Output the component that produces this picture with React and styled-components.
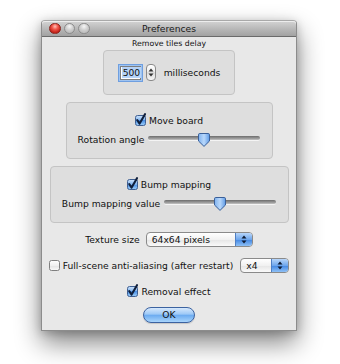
import React, { useId } from 'react';
import styled, { createGlobalStyle } from 'styled-components';

const Global = createGlobalStyle`
  html, body { margin: 0; padding: 0; background: #ffffff; }
  body {
    width: 340px; height: 364px; overflow: hidden;
    font-family: "DejaVu Sans", "Liberation Sans", sans-serif;
    color: #111;
  }
`;

const Stage = styled.div`
  padding: 20px 0 0 41px;
`;

const Window = styled.div`
  width: 256px;
  height: 311px;
  box-sizing: border-box;
  display: flex;
  flex-direction: column;
  background: #e8e8e8;
  border: 1px solid #8c8c8c;
  border-top-color: #a9a9a9;
  border-radius: 4px 4px 0 0;
  box-shadow: 0 12px 26px rgba(0, 0, 0, 0.48), 0 2px 10px rgba(0, 0, 0, 0.2);
`;

const TitleBar = styled.div`
  flex: none;
  height: 15px;
  display: grid;
  grid-template-columns: 1fr auto 1fr;
  align-items: center;
  background: linear-gradient(#d4d4d4, #b4b4b4 60%, #a2a2a2);
  border-bottom: 1px solid #6a6a6a;
  border-radius: 3px 3px 0 0;
  box-shadow: inset 0 1px 0 #ededed;
`;

const Lights = styled.div`
  display: flex;
  gap: 3px;
  padding-left: 7px;
  align-items: center;
`;

const Light = styled.span`
  width: 11.5px;
  height: 11.5px;
  box-sizing: border-box;
  border-radius: 50%;
  border: 1px solid ${p => (p.$red ? '#8a231d' : '#8c8c8c')};
  background: ${p =>
    p.$red
      ? 'radial-gradient(circle at 50% 28%, #ffc2b8 0%, #f2584c 35%, #c8261c 70%, #9e1710 100%)'
      : 'radial-gradient(circle at 50% 28%, #f6f6f6 0%, #cfcfcf 45%, #b0b0b0 100%)'};
`;

const Title = styled.div`
  font-size: 9.2px;
  line-height: 15px;
  color: #1a1a1a;
  white-space: nowrap;
`;

const Content = styled.div`
  flex: 1;
  display: flex;
  flex-direction: column;
  align-items: center;
`;

const GroupTitle = styled.div`
  margin-top: 2px;
  font-size: 7.8px;
  line-height: 10px;
  white-space: nowrap;
`;

const Group = styled.div`
  box-sizing: border-box;
  width: ${p => p.$w}px;
  height: ${p => p.$h}px;
  margin-top: ${p => p.$mt}px;
  border: 1px solid #c4c4c4;
  border-radius: 4px;
  background: #dedede;
  display: flex;
  flex-direction: column;
  align-items: center;
  justify-content: center;
  gap: 7px;
`;

const Row = styled.div`
  display: flex;
  align-items: center;
  gap: ${p => p.$gap ?? 4}px;
  margin-top: ${p => p.$mt ?? 0}px;
  height: ${p => p.$h}px;
`;

const Label = styled.span`
  font-size: 9.2px;
  line-height: 11px;
  white-space: nowrap;
  margin-left: ${p => p.$ml ?? 0}px;
`;

const Field = styled.div`
  box-sizing: border-box;
  width: 21px;
  height: 14px;
  margin: 2px;
  background: #fff;
  border: 1px solid #7e7e7e;
  box-shadow: 0 0 0 1px #9fc3f0, 0 0 0 2px #6f9fe0;
  display: flex;
  align-items: center;
  padding-left: 1px;
`;

const Selected = styled.span`
  font-size: 9.2px;
  line-height: 11px;
  background: #b5d3f8;
  padding: 0 1px;
`;

const Stepper = styled.div`
  box-sizing: border-box;
  width: 10px;
  height: 17px;
  margin-left: 3px;
  margin-right: 4px;
  border: 1px solid #8a8a8a;
  border-radius: 4px;
  background: linear-gradient(#ffffff, #ececec 50%, #dcdcdc 50%, #f6f6f6);
  display: flex;
  align-items: center;
  justify-content: center;
`;

const SliderBox = styled.div`
  position: relative;
  width: 112px;
  height: 14px;
`;

const Track = styled.div`
  margin-top: 3px;
  height: 4px;
  border-radius: 2px;
  background: linear-gradient(#6c6c6c, #9a9a9a 60%, #c4c4c4);
  box-shadow: 0 1px 0 #f4f4f4;
`;

const Knob = styled.svg`
  position: absolute;
  top: 0;
  width: 12px;
  height: 14px;
`;

const Popup = styled.div`
  box-sizing: border-box;
  width: ${p => p.$w}px;
  height: 15px;
  margin-left: ${p => p.$ml ?? 0}px;
  border: 1px solid #8a8a8a;
  border-radius: 4px;
  background: linear-gradient(#ffffff, #f1f1f1 50%, #e4e4e4 50%, #fafafa);
  display: flex;
  align-items: stretch;
  overflow: hidden;
`;

const PopupText = styled.span`
  flex: 1;
  font-size: 9.2px;
  line-height: 13px;
  padding-left: 5px;
  white-space: nowrap;
`;

const PopupArrows = styled.span`
  width: 16px;
  border-left: 1px solid #4f7fc4;
  background: linear-gradient(#b8d6fa, #6ea6ec 50%, #3f84e2 50%, #8fc1f6);
  display: flex;
  align-items: center;
  justify-content: center;
`;

const OkButton = styled.button`
  box-sizing: border-box;
  margin-top: 10px;
  width: 52px;
  height: 16px;
  padding: 0;
  border: 1px solid #3b62a0;
  border-radius: 8px;
  background: linear-gradient(#d6e8fc, #9cc8f6 45%, #6aaaf0 50%, #a8d4fb);
  box-shadow: 0 1px 1px rgba(0, 0, 0, 0.15);
  font-family: inherit;
  font-size: 9.2px;
  line-height: 14px;
  color: #111;
`;

function CheckBox({ checked }) {
  const id = useId();
  return (
    <svg width="11" height="11" viewBox="0 0 11 11" style={{ flex: 'none', overflow: 'visible' }}>
      <defs>
        <linearGradient id={id} x1="0" y1="0" x2="0" y2="1">
          {checked ? (
            <>
              <stop offset="0" stopColor="#cfe4fb" />
              <stop offset="0.5" stopColor="#7eb3ef" />
              <stop offset="0.5" stopColor="#4a8fe4" />
              <stop offset="1" stopColor="#9fd0fa" />
            </>
          ) : (
            <>
              <stop offset="0" stopColor="#ffffff" />
              <stop offset="0.5" stopColor="#f0f0f0" />
              <stop offset="0.5" stopColor="#e2e2e2" />
              <stop offset="1" stopColor="#fbfbfb" />
            </>
          )}
        </linearGradient>
      </defs>
      <rect x="0.5" y="0.5" width="10" height="10" rx="2" fill={`url(#${id})`} stroke={checked ? '#3f5f92' : '#7f7f7f'} />
      {checked && (
        <path d="M2.2 5 L4.6 8.6 L10 -0.8" fill="none" stroke="#0f1f3c" strokeWidth="2.1" strokeLinecap="round" strokeLinejoin="round" />
      )}
    </svg>
  );
}

function Slider({ value }) {
  const id = useId();
  return (
    <SliderBox>
      <Track />
      <Knob viewBox="0 0 12 14" style={{ left: `${value * 100}px` }}>
        <defs>
          <linearGradient id={id} x1="0" y1="0" x2="1" y2="0">
            <stop offset="0" stopColor="#7fb2ef" />
            <stop offset="0.5" stopColor="#b9d8fb" />
            <stop offset="1" stopColor="#5f9be6" />
          </linearGradient>
        </defs>
        <path d="M1.8 0.5 H10.2 Q11.5 0.5 11.5 1.8 V8 L6 13.4 L0.5 8 V1.8 Q0.5 0.5 1.8 0.5 Z" fill={`url(#${id})`} stroke="#3a5f98" />
      </Knob>
    </SliderBox>
  );
}

function UpDown({ color = '#111' }) {
  return (
    <svg width="6" height="9" viewBox="0 0 6 9">
      <path d="M3 0.5 L5.5 3.5 H0.5 Z" fill={color} />
      <path d="M3 8.5 L5.5 5.5 H0.5 Z" fill={color} />
    </svg>
  );
}

function PopupButton({ width, text, ml }) {
  return (
    <Popup $w={width} $ml={ml}>
      <PopupText>{text}</PopupText>
      <PopupArrows>
        <UpDown color="#0f1c33" />
      </PopupArrows>
    </Popup>
  );
}

export default function App() {
  return (
    <>
      <Global />
      <Stage>
        <Window>
          <TitleBar>
            <Lights>
              <Light $red />
              <Light />
              <Light />
            </Lights>
            <Title>Preferences</Title>
            <span />
          </TitleBar>
          <Content>
            <GroupTitle>Remove tiles delay</GroupTitle>
            <Group $w={132} $h={45} $mt={1}>
              <Row $gap={0} $h={18}>
                <Field>
                  <Selected>500</Selected>
                </Field>
                <Stepper>
                  <UpDown color="#333" />
                </Stepper>
                <Label $ml={4}>milliseconds</Label>
              </Row>
            </Group>

            <Group $w={207} $h={57} $mt={7}>
              <Row $gap={3} $h={11}>
                <CheckBox checked />
                <Label>Move board</Label>
              </Row>
              <Row $gap={4} $h={14}>
                <Label>Rotation angle</Label>
                <Slider value={0.5} />
              </Row>
            </Group>

            <Group $w={239} $h={57} $mt={7}>
              <Row $gap={3} $h={11}>
                <CheckBox checked />
                <Label>Bump mapping</Label>
              </Row>
              <Row $gap={4} $h={14}>
                <Label>Bump mapping value</Label>
                <Slider value={0.5} />
              </Row>
            </Group>

            <Row $mt={9} $h={15} $gap={6}>
              <Label>Texture size</Label>
              <PopupButton width={107} text="64x64 pixels" />
            </Row>

            <Row $mt={11} $h={15} $gap={3}>
              <CheckBox />
              <Label>Full-scene anti-aliasing (after restart)</Label>
              <PopupButton width={49} text="x4" ml={4} />
            </Row>

            <Row $mt={13} $h={11} $gap={3}>
              <CheckBox checked />
              <Label>Removal effect</Label>
            </Row>

            <OkButton>OK</OkButton>
          </Content>
        </Window>
      </Stage>
    </>
  );
}
